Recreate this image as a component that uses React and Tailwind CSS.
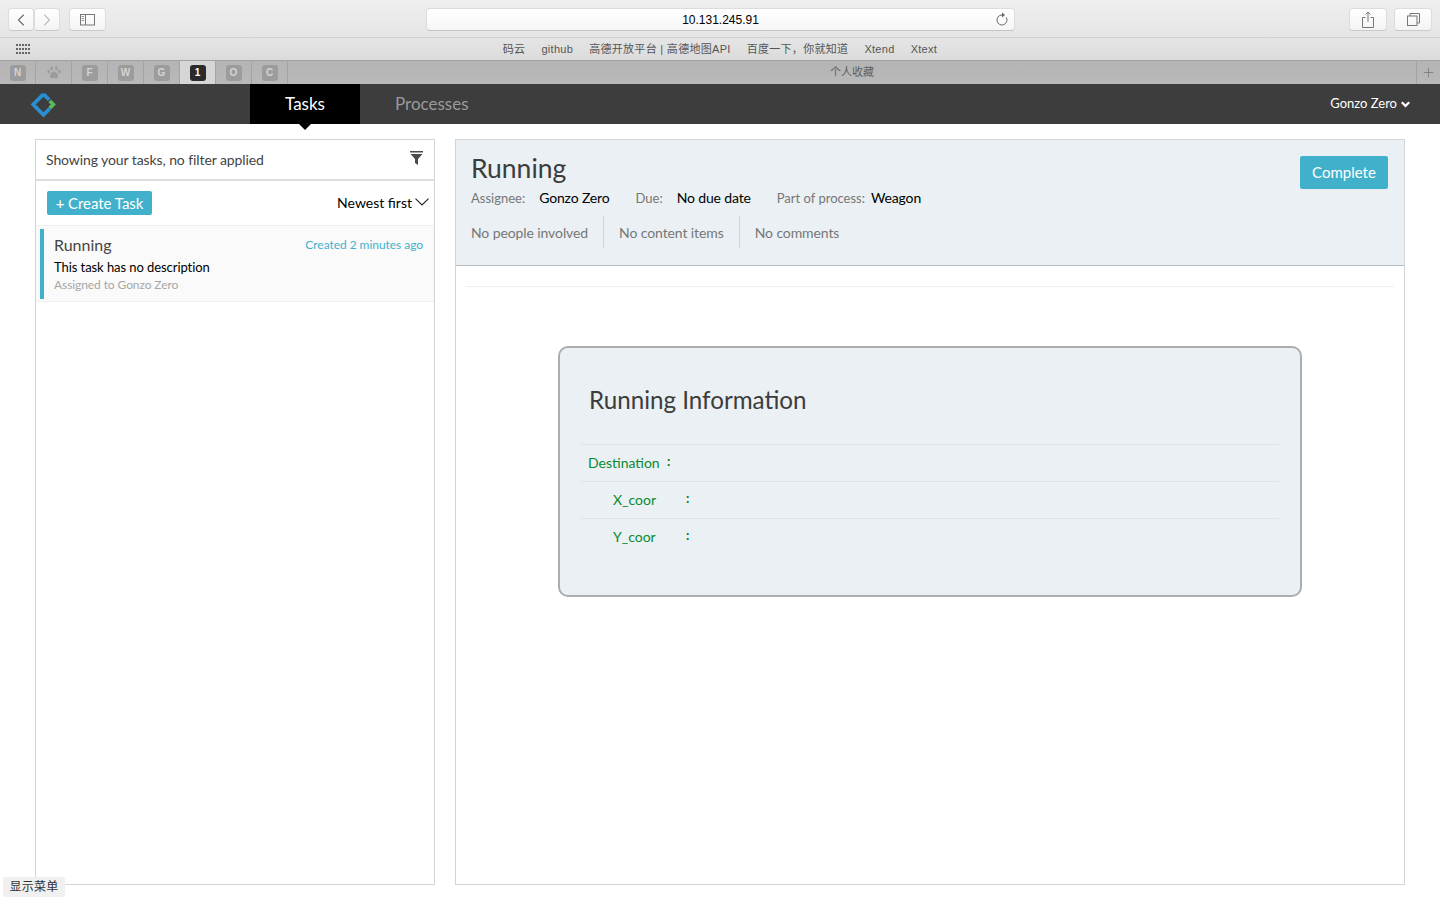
import { ChevronLeft, ChevronRight, Plus } from 'lucide-react';

const bookmarks = ['码云', 'github', '高德开放平台 | 高德地图API', '百度一下，你就知道', 'Xtend', 'Xtext'];
const tabs = ['N', 'paw', 'F', 'W', 'G', '1', 'O', 'C'];

function Paw() {
  return (
    <svg width="14" height="13" viewBox="0 0 14 13" fill="#9c9c9c">
      <ellipse cx="4.6" cy="2.2" rx="1.4" ry="2" />
      <ellipse cx="9.4" cy="2.2" rx="1.4" ry="2" />
      <ellipse cx="1.7" cy="5.6" rx="1.3" ry="1.8" />
      <ellipse cx="12.3" cy="5.6" rx="1.3" ry="1.8" />
      <path d="M7 5.6c2 0 4.2 3 4.2 5 0 1.6-1.6 1.8-2.4 1.6-.8-.2-1.2-.4-1.8-.4s-1 .2-1.8.4c-.8.2-2.4 0-2.4-1.6 0-2 2.2-5 4.2-5z" />
    </svg>
  );
}

function ChromeButton({ className, children }) {
  return (
    <div className={`h-[23px] flex items-center justify-center rounded-[4px] bg-gradient-to-b from-white to-[#f4f4f4] border border-[#dcdcdc] border-b-[#c9c9c9] ${className}`}>
      {children}
    </div>
  );
}

function BrowserChrome() {
  return (
    <div className="font-['Liberation_Sans','Noto_Sans_CJK_SC',sans-serif]">
      <div className="h-[38px] flex items-start pt-[8px] px-[8px] bg-gradient-to-b from-[#efefef] to-[#e5e5e5] border-b border-[#d2d2d2]">
        <ChromeButton className="w-[26px]">
          <ChevronLeft size={20} strokeWidth={1.3} className="text-[#6a6a6a]" />
        </ChromeButton>
        <ChromeButton className="w-[26px]">
          <ChevronRight size={20} strokeWidth={1.3} className="text-[#bdbdbd]" />
        </ChromeButton>
        <ChromeButton className="w-[37px] ml-[9px]">
          <svg width="16" height="12" viewBox="0 0 16 12" fill="none" stroke="#777" strokeWidth="1">
            <rect x="0.5" y="0.5" width="14" height="10.5" />
            <path d="M5.5 0.5v10.5" />
            <path d="M1.5 2.5h2.5M1.5 4.500h2.500M1.500 6.500h2.500" stroke="#999" />
          </svg>
        </ChromeButton>
        <div className="relative ml-[320px] w-[589px] h-[23px] flex items-center justify-center rounded-[4px] bg-gradient-to-b from-white to-[#f6f6f6] border border-[#dcdcdc] border-b-[#c4c4c4] text-[12px] text-black">
          10.131.245.91
          <svg width="14" height="14" viewBox="0 0 14 14" fill="none" className="absolute right-[5px] top-[3px]">
            <path d="M7 3A5 5 0 1 0 11.3 5.5" stroke="#666" strokeWidth="1" />
            <path d="M7 .5 10 3 7 5.5z" fill="#666" />
          </svg>
        </div>
        <ChromeButton className="w-[38px] ml-auto">
          <svg width="12" height="17" viewBox="0 0 12 17" fill="none" stroke="#777" strokeWidth="1">
            <path d="M3.5 6.5H.5v10h11v-10H8.5" />
            <path d="M6 11V1M3.5 3.5 6 1l2.5 2.5" />
          </svg>
        </ChromeButton>
        <ChromeButton className="w-[38px] ml-[7px]">
          <svg width="13" height="13" viewBox="0 0 13 13" fill="none" stroke="#777" strokeWidth="1">
            <rect x="0.5" y="3" width="9.5" height="9.5" />
            <path d="M3 3V.5h9.5V10H10" />
          </svg>
        </ChromeButton>
      </div>

      <div className="relative h-[23px] flex items-center justify-center gap-[16px] bg-gradient-to-b from-[#e5e5e5] to-[#dbdbdb] border-b border-[#a3a3a3] text-[11px] tracking-[0.3px] text-[#555]">
        <div className="absolute left-[16px] top-[6px] grid grid-cols-5 gap-x-[1px] gap-y-[2px]">
          {Array.from({ length: 15 }).map((_, i) => (
            <span key={i} className="w-[2px] h-[2px] bg-[#666]" />
          ))}
        </div>
        {bookmarks.map((b) => (
          <span key={b}>{b}</span>
        ))}
      </div>

      <div className="h-[23px] flex bg-gradient-to-b from-[#b4b4b4] to-[#b9b9b9] text-[#5f5f5f] text-[11px]">
        {tabs.map((t) => (
          <div
            key={t}
            className={`w-[36px] flex items-center justify-center border-r border-[#a3a3a3] ${t === '1' ? 'bg-[#d6d6d6]' : ''}`}
          >
            {t === 'paw' ? (
              <Paw />
            ) : (
              <span className={`w-[16px] h-[16px] flex items-center justify-center rounded-[3px] text-[10px] font-bold ${t === '1' ? 'bg-[#2b2b2b] text-white' : 'bg-[#9c9c9c] text-[#d4d4d4]'}`}>
                {t}
              </span>
            )}
          </div>
        ))}
        <div className="flex-1 flex items-center justify-center">个人收藏</div>
        <div className="w-[24px] flex items-center justify-center border-l border-[#a3a3a3]">
          <Plus size={15} strokeWidth={1} className="text-[#666]" />
        </div>
      </div>
    </div>
  );
}

function Logo() {
  return (
    <svg width="29" height="29" viewBox="0 0 28 28" fill="none">
      <path d="M14 4 4 14l10 10 6-6" stroke="#2a8fd0" strokeWidth="3.5" strokeLinejoin="miter" />
      <path d="M14 4l5.5 5.5" stroke="#2a8fd0" strokeWidth="3.5" />
      <path d="M20 10.5 23.500 14 20 17.500" stroke="#5cb85c" strokeWidth="3.500" />
    </svg>
  );
}

function NavBar() {
  return (
    <div className="h-[40px] flex items-stretch bg-[#3d3d3d]">
      <div className="w-[250px] pl-[29px] flex items-center">
        <Logo />
      </div>
      <div className="relative w-[110px] bg-black flex items-center justify-center text-[17px] text-white">
        Tasks
        <span className="absolute left-1/2 -translate-x-1/2 -bottom-[6px] w-0 h-0 border-l-[6px] border-r-[6px] border-t-[6px] border-l-transparent border-r-transparent border-t-black" />
      </div>
      <div className="ml-[35px] flex items-center text-[17px] text-[#9a9a9a]">Processes</div>
      <div className="ml-auto pr-[30px] flex items-center gap-[4px] text-[13px] text-white">
        Gonzo Zero
        <svg width="9" height="7" viewBox="0 0 9 7" fill="none" stroke="white" strokeWidth="2.2">
          <path d="M.8 1.2 4.5 4.9 8.2 1.2" />
        </svg>
      </div>
    </div>
  );
}

function TaskList() {
  return (
    <div className="w-[400px] h-[746px] border border-[#d4d4d4] shrink-0">
      <div className="h-[41px] flex items-center justify-between pl-[10px] pr-[11px] border-b-2 border-[#dedede] text-[14px] tracking-[-0.09px] text-[#444]">
        Showing your tasks, no filter applied
        <svg width="13" height="14" viewBox="0 0 13 14" className="-mt-[3px]" fill="#4a4a4a">
          <rect x="0" y="0" width="13" height="1.5" />
          <path d="M0.5 3h12L8 8v6l-3-2V8z" />
        </svg>
      </div>
      <div className="h-[45px] flex items-center justify-between pl-[11px] pr-[5px] border-b border-[#efefef]">
        <button className="w-[105px] h-[24px] flex items-center justify-center rounded-[2px] bg-[#41b1cb] text-[15px] tracking-[-0.05px] text-white">
          + Create Task
        </button>
        <div className="flex items-center gap-[3px] -mt-[1px] text-[14px] text-black">
          Newest first
          <svg width="14" height="8" viewBox="0 0 14 8" fill="none" stroke="#222" strokeWidth="1.1" className="-mt-[2px]">
            <path d="M.5.7 7 7 13.5.7" />
          </svg>
        </div>
      </div>
      <div className="h-[76px] py-[3px] pl-[4px] bg-[#fafafa] border-b border-[#f1f1f1]">
        <div className="h-[70px] pl-[10px] pr-[11px] pt-[6px] border-l-4 border-[#41b1cb]">
          <div className="flex items-center justify-between">
            <span className="text-[16px] leading-[20px] text-[#444]">Running</span>
            <span className="text-[12px] leading-[20px] tracking-[-0.05px] text-[#41b1cb]">Created 2 minutes ago</span>
          </div>
          <div className="text-[13px] leading-[18px] mt-[3px] tracking-[-0.07px] text-black">This task has no description</div>
          <div className="text-[12px] leading-[18px] tracking-[-0.09px] text-[#a6a6a6]">Assigned to Gonzo Zero</div>
        </div>
      </div>
    </div>
  );
}

function TaskHeader() {
  return (
    <div className="relative h-[126px] pl-[15px] pt-[10px] bg-[#eaf0f3] border-b border-[#b4bdc4]">
      <div className="text-[26.5px] leading-[36px] text-[#3c3c3c]">Running</div>
      <div className="flex items-baseline mt-[1px] h-[22px] text-[14px] tracking-[-0.15px] text-black">
        <span className="text-[13px] tracking-normal text-[#777]">Assignee:</span>
        <span className="ml-[14px]">Gonzo Zero</span>
        <span className="ml-[26px] text-[13px] tracking-normal text-[#777]">Due:</span>
        <span className="ml-[14px]">No due date</span>
        <span className="ml-[26px] text-[13px] tracking-normal text-[#777]">Part of process:</span>
        <span className="ml-[6px]">Weagon</span>
      </div>
      <div className="flex items-stretch mt-[7px] h-[32px] text-[14px] tracking-[-0.1px] text-[#777]">
        <span className="flex items-center pr-[15px] border-r border-[#d2d6d9]">No people involved</span>
        <span className="flex items-center px-[15px] border-r border-[#d2d6d9]">No content items</span>
        <span className="flex items-center px-[15px]">No comments</span>
      </div>
      <button className="absolute right-[16px] top-[16px] w-[88px] h-[33px] rounded-[2px] bg-[#41b1cb] text-[15px] text-white">
        Complete
      </button>
    </div>
  );
}

function InfoRow({ label, colon, indent }) {
  return (
    <div className="relative h-[37px] flex items-center pb-[2px] border-t border-[#dfe3e6] text-[14px] text-[#0a8a2e]">
      <span className={indent ? 'ml-[32px]' : 'ml-[7px]'}>{label}</span>
      <span className={`absolute top-[7px] font-bold text-[13px] text-[#0a7a1e] ${colon}`}>:</span>
    </div>
  );
}

function TaskDetail() {
  return (
    <div className="flex-1 h-[746px] border border-[#d4d4d4]">
      <TaskHeader />
      <div className="mx-[10px] mt-[20px] border-t border-[#efefef]" />
      <div className="mx-[102px] mt-[59px] h-[251px] pt-[37px] px-[21px] rounded-[10px] border-2 border-[#adadad] bg-[#eaf0f3]">
        <div className="pl-[8px] h-[30px] text-[24.2px] leading-[30px] text-[#3c3c3c]">Running Information</div>
        <div className="mt-[29px]">
          <InfoRow label="Destination" colon="left-[86px]" />
          <InfoRow label="X_coor" colon="left-[105px]" indent />
          <InfoRow label="Y_coor" colon="left-[105px]" indent />
        </div>
      </div>
    </div>
  );
}

export default function App() {
  return (
    <div className="relative h-[900px] overflow-hidden bg-white font-['Lato',sans-serif]">
      <BrowserChrome />
      <NavBar />
      <div className="flex gap-[20px] px-[35px] pt-[15px]">
        <TaskList />
        <TaskDetail />
      </div>
      <div className="absolute left-[3px] top-[877px] w-[62px] h-[20px] flex items-center justify-center rounded-[3px] bg-[#f0f0f0] text-[12px] tracking-[0.2px] text-[#333] font-['Liberation_Sans','Noto_Sans_CJK_SC',sans-serif]">
        显示菜单
      </div>
    </div>
  );
}
